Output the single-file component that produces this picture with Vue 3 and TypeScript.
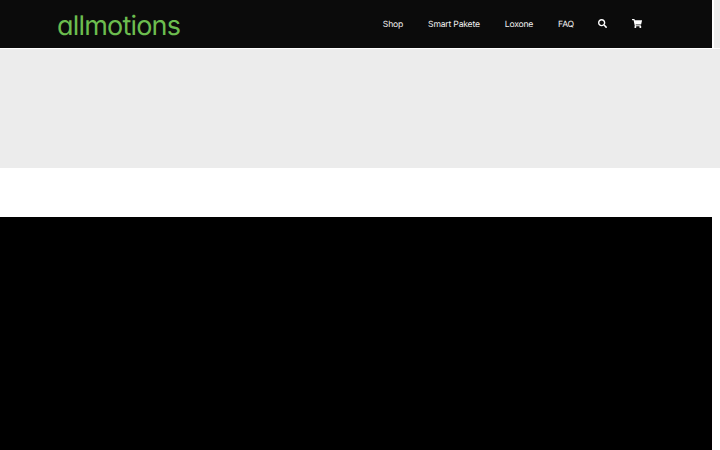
<script setup lang="ts">
const links = ['Shop', 'Smart Pakete', 'Loxone', 'FAQ']
</script>

<template>
  <div class="page">
    <div class="top">
      <header class="header">
        <a class="logo">allmotions</a>
        <nav class="nav">
          <a v-for="link in links" :key="link" class="nav-link">{{ link }}</a>
          <svg class="icon search" viewBox="0 0 512 512" width="9" height="9">
            <path fill="#fff" d="M505 442.700L405.300 343c-4.500-4.500-10.600-7-17-7H372c27.600-35.300 44-79.700 44-128C416 93.100 322.900 0 208 0S0 93.100 0 208s93.100 208 208 208c48.300 0 92.700-16.400 128-44v16.300c0 6.400 2.500 12.500 7 17l99.700 99.700c9.400 9.400 24.600 9.400 33.900 0l28.300-28.300c9.400-9.400 9.400-24.600.1-34zM208 336c-70.700 0-128-57.200-128-128 0-70.700 57.200-128 128-128 70.700 0 128 57.200 128 128 0 70.700-57.200 128-128 128z" />
          </svg>
          <svg class="icon" viewBox="0 0 576 512" width="10" height="9">
            <path fill="#fff" d="M528.120 301.319l47.273-208C578.806 78.301 567.391 64 551.990 64H159.208l-9.166-44.810C147.758 8.021 137.930 0 126.529 0H24C10.745 0 0 10.745 0 24v16c0 13.255 10.745 24 24 24h69.883l70.248 343.435C147.325 417.100 136 435.222 136 456c0 30.928 25.072 56 56 56s56-25.072 56-56c0-15.674-6.447-29.835-16.824-40h209.647C430.447 426.165 424 440.326 424 456c0 30.928 25.072 56 56 56s56-25.072 56-56c0-22.172-12.888-41.332-31.579-50.405l5.517-24.276c3.413-15.018-8.002-29.319-23.403-29.319H218.117l-6.545-32h293.145c11.206 0 20.920-7.754 23.403-18.681z" />
          </svg>
        </nav>
      </header>
      <div class="side"></div>
    </div>
    <div class="band"></div>
    <div class="spacer"></div>
    <div class="dark"></div>
  </div>
</template>

<style scoped>
.page {
  width: 720px;
  height: 450px;
  overflow: hidden;
  background: #fff;
  font-family: Inter, "Liberation Sans", sans-serif;
  text-rendering: geometricPrecision;
}

.top {
  display: flex;
  height: 48px;
}

.header {
  width: 712px;
  box-sizing: border-box;
  padding: 0 70px 0 57px;
  background: #0b0b0b;
  display: flex;
  align-items: center;
  justify-content: space-between;
}

.side {
  flex: 1;
  border-left: 2px solid #fff;
  background: #ececec;
}

.logo {
  font-family: Inter, "Open Sans", sans-serif;
  font-feature-settings: "cv11";
  font-size: 27px;
  padding-top: 2px;
  color: #6cbd4f;
  letter-spacing: -0.8px;
}

.nav {
  display: flex;
  align-items: center;
  gap: 25px;
}

.nav-link {
  font-size: 8.6px;
  padding-top: 2px;
  color: #fff;
  opacity: 0.95;
  letter-spacing: -0.2px;
}

.icon {
  display: block;
  margin-bottom: 1px;
}

.search {
  margin-left: -1px;
}

.band {
  height: 119px;
  margin-top: 1px;
  background: #ececec;
}

.spacer {
  height: 49px;
}

.dark {
  width: 712px;
  height: 233px;
  background: #000;
}
</style>

<style>
html, body {
  margin: 0;
  background: #fff;
}
</style>
